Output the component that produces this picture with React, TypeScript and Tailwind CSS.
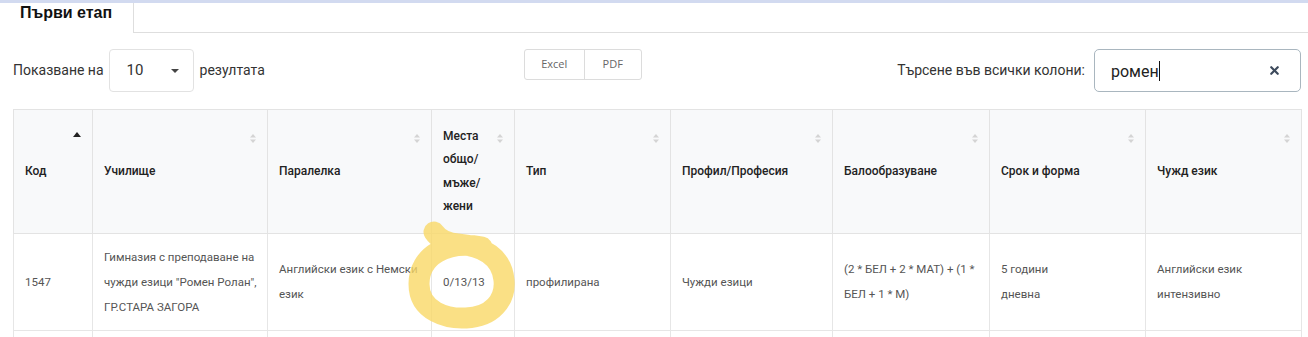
import { X } from "lucide-react";

const cols = [
  { key: "code", label: "Код", w: 79, sorted: true },
  { key: "school", label: "Училище", w: 175 },
  { key: "class", label: "Паралелка", w: 164 },
  { key: "places", label: ["Места", "общо/", "мъже/", "жени"], w: 83 },
  { key: "type", label: "Тип", w: 156 },
  { key: "profile", label: "Профил/Професия", w: 162 },
  { key: "score", label: "Балообразуване", w: 157 },
  { key: "term", label: "Срок и форма", w: 156 },
  { key: "lang", label: "Чужд език", w: 156 },
];

const row: string[][] = [
  ["1547"],
  ["Гимназия с преподаване на", "чужди езици \"Ромен Ролан\",", "ГР.СТАРА ЗАГОРА"],
  ["Английски език с Немски", "език"],
  ["0/13/13"],
  ["профилирана"],
  ["Чужди езици"],
  ["(2 * БЕЛ + 2 * МАТ) + (1 *", "БЕЛ + 1 * М)"],
  ["5 години", "дневна"],
  ["Английски език", "интензивно"],
];

function SortIcon({ active }: { active?: boolean }) {
  if (active) {
    return (
      <svg width="8" height="5" viewBox="0 0 8 5" className="absolute right-[11px] top-[22px]">
        <path d="M0 5 L4 0 L8 5 Z" fill="#222" />
      </svg>
    );
  }
  return (
    <svg width="6" height="9" viewBox="0 0 6 9" className="absolute right-[11px] top-[24px]">
      <path d="M0 3.5 L3 0 L6 3.5 Z" fill="#d4d4d4" />
      <path d="M0 5.5 L3 9 L6 5.5 Z" fill="#d4d4d4" />
    </svg>
  );
}

export default function App() {
  return (
    <div className="relative h-[337px] w-[1308px] overflow-hidden bg-white font-['Roboto',sans-serif]">
      <div className="h-[3px] bg-[#d2daf0]" />

      {/* tabs */}
      <div className="flex h-[30px]">
        <div className="w-[134px] border-r border-[#dedede] pl-5 font-['Liberation_Sans',sans-serif] text-[16px] font-bold leading-[20px] text-[#111]">
          Първи етап
        </div>
        <div className="flex-1 border-b border-[#dedede]" />
      </div>

      {/* controls */}
      <div className="mt-[16px] flex h-[43px] items-start pl-[13px] pr-[7px] text-[14px] text-[#333]">
        <div className="flex h-[43px] items-center">
          <span>Показване на</span>
          <div className="ml-[5px] flex h-[43px] w-[85px] items-center rounded-[4px] border border-[#e2e2e2] pl-[17px] pr-[14px]">
            <span className="flex-1 text-[15px]">10</span>
            <svg width="8" height="4" viewBox="0 0 8 4">
              <path d="M0 0 L8 0 L4 4 Z" fill="#444" />
            </svg>
          </div>
          <span className="ml-[6px]">резултата</span>
        </div>

        <div className="ml-[259px] flex h-[31px] w-[118px] rounded-[3px] border border-[#dcdcdc] font-['Open_Sans',sans-serif] text-[11px] text-[#666]">
          <div className="flex w-[60px] items-center justify-center border-r border-[#dcdcdc]">Excel</div>
          <div className="flex flex-1 items-center justify-center">PDF</div>
        </div>

        <div className="ml-auto flex h-[43px] items-center">
          <span>Търсене във всички колони:</span>
          <div className="ml-[9px] flex h-[43px] w-[207px] items-center rounded-[5px] border border-[#a9b6bf] pl-[16px] pr-[19px]">
            <span className="flex-1 text-[16px] text-[#222]">
              ромен<span className="inline-block h-[20px] w-px translate-y-[4px] bg-[#111]" />
            </span>
            <X size={13} strokeWidth={4} className="text-[#3d4a5c]" />
          </div>
        </div>
      </div>

      {/* table */}
      <div className="mt-[17px] px-[13px]">
        <table className="w-[1288px] table-fixed border-collapse text-left">
          <colgroup>
            {cols.map((c) => (
              <col key={c.key} style={{ width: c.w }} />
            ))}
          </colgroup>
          <thead>
            <tr className="h-[124px] bg-[#f8f9fa]">
              {cols.map((c) => (
                <th
                  key={c.key}
                  className="relative border border-[#e3e3e3] pl-[11px] pr-[20px] align-middle text-[12px] font-medium leading-[23.5px] text-[#222]"
                >
                  {Array.isArray(c.label)
                    ? c.label.map((l) => <div key={l}>{l}</div>)
                    : c.label}
                  <SortIcon active={c.sorted} />
                </th>
              ))}
            </tr>
          </thead>
          <tbody>
            <tr className="h-[97px]">
              {row.map((lines, i) => (
                <td
                  key={i}
                  className="border border-[#e6e6e6] pl-[11px] align-middle text-[11.5px] leading-[25px] text-[#555]"
                >
                  {lines.map((l) => (
                    <div key={l} className="whitespace-nowrap">{l}</div>
                  ))}
                </td>
              ))}
            </tr>
            <tr className="h-[40px]">
              {row.map((_, i) => (
                <td key={i} className="border border-[#e6e6e6]" />
              ))}
            </tr>
          </tbody>
        </table>
      </div>

      {/* highlighter mark over the table */}
      <svg
        className="pointer-events-none absolute left-0 top-0"
        width="1308"
        height="337"
        viewBox="0 0 1308 337"
      >
        <path
          d="M482 247 C446 240 419 256 419 284 C419 312 448 319 466 318 C492 317 506 300 504 280 C502 258 484 246 458 244 C446 243 438 238 434 232"
          fill="none"
          stroke="#f9d866"
          strokeWidth="21"
          strokeLinecap="round"
          opacity="0.8"
        />
      </svg>
    </div>
  );
}
